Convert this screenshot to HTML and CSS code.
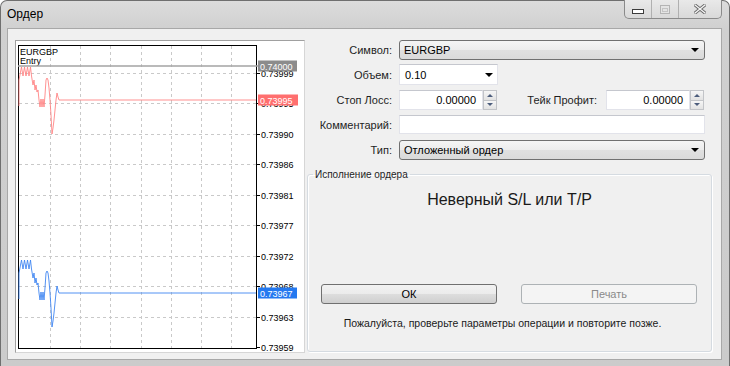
FILE: index.html
```html
<!DOCTYPE html>
<html lang="ru">
<head>
<meta charset="utf-8">
<title>Ордер</title>
<link rel="stylesheet" href="styles.css">
</head>
<body>
<div class="window">
  <div class="titlebar">
    <span class="title">Ордер</span>
    <div class="controls">
      <div class="ctl ctl-min"><svg width="12" height="6" viewBox="0 0 12 6"><rect x="0.5" y="0.5" width="11" height="4" fill="#fff" stroke="#3c3c3c"/></svg></div>
      <div class="ctl ctl-max"><svg width="10" height="9" viewBox="0 0 10 9"><rect x="0.5" y="0.5" width="9" height="8" fill="#e4e4e4" stroke="#b4b4b4"/><rect x="2.5" y="3.5" width="5" height="3" fill="none" stroke="#c4c4c4"/></svg></div>
      <div class="ctl ctl-close"><svg width="12" height="10" viewBox="0 0 12 10"><path d="M1 1 L11 9 M11 1 L1 9" stroke="#6a6a6a" stroke-width="3.2" stroke-linecap="square"/><path d="M1 1 L11 9 M11 1 L1 9" stroke="#f4f4f4" stroke-width="1.4" stroke-linecap="square"/></svg></div>
    </div>
  </div>
  <div class="client">
    <div class="chart">
      <svg width="288" height="311" viewBox="16 41 288 311" class="chart-svg">
        <rect x="16" y="41" width="288" height="311" fill="#fff"/>
        <g stroke="#c9c9c9" stroke-dasharray="3 3" stroke-width="1">
          <path d="M50.5 46V348M80.5 46V348M110.5 46V348M141.5 46V348M171.5 46V348M201.5 46V348M231.5 46V348"/>
          <path d="M19 73.5H256M19 103.5H256M19 134.5H256M19 164.5H256M19 195.5H256M19 225.5H256M19 256.5H256M19 286.5H256M19 317.5H256"/>
        </g>
        <rect x="18.5" y="45.5" width="238" height="303" fill="none" stroke="#000"/>
        <g stroke="#000">
          <path d="M257 73.5H260M257 103.5H260M257 134.5H260M257 164.5H260M257 195.5H260M257 225.5H260M257 256.5H260M257 286.5H260M257 317.5H260M257 347.5H260"/>
        </g>
        <g font-family="Liberation Sans, Arial, sans-serif" font-size="9" fill="#000">
          <text x="261" y="77">0.73999</text>
          <text x="261" y="107">0.73995</text>
          <text x="261" y="138">0.73990</text>
          <text x="261" y="168">0.73986</text>
          <text x="261" y="199">0.73981</text>
          <text x="261" y="229">0.73977</text>
          <text x="261" y="260">0.73972</text>
          <text x="261" y="290">0.73968</text>
          <text x="261" y="321">0.73963</text>
          <text x="261" y="351">0.73959</text>
          <text x="20" y="55">EURGBP</text>
          <text x="20" y="64">Entry</text>
        </g>
        <path d="M18 66H258" stroke="#a3a3a3" stroke-width="1.5"/>
        <polyline fill="none" stroke="#ff8585" stroke-width="0.9" points="19,106 19,80 20.5,72 21.5,67 23,76 24.5,67 26,76 27.5,67 29,76 30.5,67 31.5,76 33,85 34,80 35,90 36,85 37,92 38,90 39,100 40,107 41,99 42,107 43,99 44,107 45,95 46,80 47,78 48,80 49,88 50,100 51,115 52,134 53,128 54,120 55,110 56,100 57,93 58,97 59,100 256,100"/>
        <polyline fill="none" stroke="#3f86f2" stroke-width="0.9" transform="translate(0,193)" points="19,106 19,80 20.5,72 21.5,67 23,76 24.5,67 26,76 27.5,67 29,76 30.5,67 31.5,76 33,85 34,80 35,90 36,85 37,92 38,90 39,100 40,107 41,99 42,107 43,99 44,107 45,95 46,80 47,78 48,80 49,88 50,100 51,115 52,134 53,128 54,120 55,110 56,100 57,93 58,97 59,100 256,100"/>
        <rect x="258" y="60.5" width="39" height="11" fill="#8c8c8c"/>
        <rect x="258" y="94.5" width="40" height="11" fill="#ff6f6f"/>
        <rect x="258" y="287.5" width="39" height="11" fill="#2479f0"/>
        <g font-family="Liberation Sans, Arial, sans-serif" font-size="9" fill="#fff">
          <text x="260" y="69.5">0.74000</text>
          <text x="260" y="103.5">0.73995</text>
          <text x="260" y="296.5">0.73967</text>
        </g>
      </svg>
    </div>
    <div class="panel">
      <div class="row row-symbol">
        <span class="lbl">Символ:</span>
        <div class="combo combo-wide"><span class="combo-text">EURGBP</span><span class="arrow"></span></div>
      </div>
      <div class="row row-volume">
        <span class="lbl">Объем:</span>
        <div class="textbox volume"><span class="tb-text">0.10</span><span class="arrow"></span></div>
      </div>
      <div class="row row-sltp">
        <span class="lbl">Стоп Лосс:</span>
        <div class="spin">
          <div class="textbox num"><span class="tb-text">0.00000</span></div>
          <div class="spin-btns"><div class="sb sb-up"><span class="tri-up"></span></div><div class="sb sb-down"><span class="tri-down"></span></div></div>
        </div>
        <span class="lbl lbl-tp">Тейк Профит:</span>
        <div class="spin">
          <div class="textbox num"><span class="tb-text">0.00000</span></div>
          <div class="spin-btns"><div class="sb sb-up"><span class="tri-up"></span></div><div class="sb sb-down"><span class="tri-down"></span></div></div>
        </div>
      </div>
      <div class="row row-comment">
        <span class="lbl">Комментарий:</span>
        <div class="textbox comment"></div>
      </div>
      <div class="row row-type">
        <span class="lbl">Тип:</span>
        <div class="combo combo-wide"><span class="combo-text">Отложенный ордер</span><span class="arrow"></span></div>
      </div>
      <fieldset class="group">
        <legend class="legend">Исполнение ордера</legend>
        <div class="msg">Неверный S/L или T/P</div>
        <div class="buttons">
          <div class="btn">ОК</div>
          <div class="btn btn-disabled">Печать</div>
        </div>
        <div class="note">Пожалуйста, проверьте параметры операции и повторите позже.</div>
      </fieldset>
    </div>
  </div>
</div>
</body>
</html>
```

FILE: styles.css
```css
html, body {
  margin: 0;
  padding: 0;
  background: #ffffff;
  overflow: hidden;
}

body {
  font-family: "Liberation Sans", Arial, sans-serif;
  font-size: 11px;
  color: #000;
}

.window {
  width: 730px;
  height: 366px;
  box-sizing: border-box;
  border: 1px solid #6f6f6f;
  border-bottom: none;
  border-radius: 7px 7px 0 0;
  background: linear-gradient(#dcdcdc, #d0d0d0 28px, #cbcbcb);
  padding: 0 7px 6px 6px;
  display: flex;
  flex-direction: column;
}

.titlebar {
  height: 27px;
  display: flex;
  align-items: flex-start;
  flex: none;
}

.title {
  font-size: 12px;
  line-height: 14px;
  padding-top: 6px;
  color: #000;
}

.controls {
  margin-left: auto;
  margin-top: -1px;
  height: 18px;
  display: flex;
  border: 1px solid #8a8a8a;
  border-top: none;
  border-radius: 0 0 5px 5px;
  overflow: hidden;
  background: linear-gradient(#e9e9e9, #d9d9d9);
}

.ctl {
  display: flex;
  align-items: center;
  justify-content: center;
  height: 18px;
}

.ctl-min {
  width: 26px;
  border-right: 1px solid #b0b0b0;
}

.ctl-min svg {
  margin-top: 6px;
}

.ctl-max {
  width: 26px;
  border-right: 1px solid #b0b0b0;
}

.ctl-close {
  width: 42px;
}

.client {
  flex: 1;
  border: 1px solid #a8a8a8;
  background: #f0f0f0;
  display: flex;
  align-items: flex-start;
  padding: 11px 0 0 7px;
}

.chart {
  width: 290px;
  height: 313px;
  box-sizing: border-box;
  border: 1px solid #a0a0a0;
  border-right-color: #d6d6d6;
  border-bottom-color: #d6d6d6;
  flex: none;
}

.chart-svg {
  display: block;
}

.panel {
  margin-left: 2px;
  width: 405px;
  display: flex;
  flex-direction: column;
}

.row {
  display: flex;
  align-items: center;
}

.lbl {
  width: 85px;
  margin-right: 7px;
  text-align: right;
  flex: none;
  color: #1e1e1e;
}

.lbl-tp {
  width: 100px;
  margin-right: 9px;
}

.row-symbol { height: 20px; }
.row-volume { height: 21px; margin-top: 4px; }
.row-sltp { height: 20px; margin-top: 5px; }
.row-comment { height: 19px; margin-top: 5px; }
.row-type { height: 20px; margin-top: 6px; }

.combo {
  height: 20px;
  box-sizing: border-box;
  border: 1px solid #707070;
  border-radius: 3px;
  background: linear-gradient(#f5f5f5, #ececec 50%, #e0e0e0 51%, #dadada);
  display: flex;
  align-items: center;
  padding-left: 4px;
}

.combo-wide {
  width: 306px;
}

.combo-text {
  color: #000;
}

.arrow {
  margin-left: auto;
  margin-right: 5px;
  width: 0;
  height: 0;
  border-top: 4px solid #000;
  border-left: 4px solid transparent;
  border-right: 4px solid transparent;
}

.textbox {
  box-sizing: border-box;
  background: #fff;
  border: 1px solid #e2e3ea;
  border-top-color: #c5c7ce;
  display: flex;
  align-items: center;
  height: 100%;
}

.volume {
  width: 99px;
  padding-left: 5px;
}

.volume .arrow {
  margin-right: 4px;
}

.comment {
  width: 306px;
}

.spin {
  display: flex;
  width: 98px;
  height: 20px;
  flex: none;
}

.num {
  width: 84px;
  justify-content: flex-end;
  padding-right: 6px;
}

.spin-btns {
  width: 14px;
  display: flex;
  flex-direction: column;
}

.sb {
  flex: 1;
  box-sizing: border-box;
  border: 1px solid #c2c4c8;
  background: linear-gradient(#f6f6f6, #e2e2e2);
  display: flex;
  align-items: center;
  justify-content: center;
}

.sb-down {
  border-top: none;
}

.tri-up {
  width: 0;
  height: 0;
  border-bottom: 3px solid #4c5d7c;
  border-left: 3px solid transparent;
  border-right: 3px solid transparent;
}

.tri-down {
  width: 0;
  height: 0;
  border-top: 3px solid #4c5d7c;
  border-left: 3px solid transparent;
  border-right: 3px solid transparent;
}

.group {
  margin: 8px 0 0 0;
  padding: 0 13px;
  width: 405px;
  height: 184px;
  box-sizing: border-box;
  border: 1px solid #d5dbe1;
  border-radius: 3px;
  box-shadow: inset 1px 1px 0 #ffffff, 1px 1px 0 #ffffff;
  min-width: 0;
}

.legend {
  font-size: 10px;
  line-height: 13px;
  padding: 0 2px;
  margin-left: -8px;
  color: #1e1e1e;
}

.msg {
  margin-top: 10px;
  font-size: 16px;
  line-height: 18px;
  text-align: center;
  color: #1a1a1a;
}

.buttons {
  margin-top: 75px;
  display: flex;
  gap: 24px;
}

.btn {
  width: 176px;
  height: 20px;
  box-sizing: border-box;
  border: 1px solid #707070;
  border-radius: 3px;
  background: linear-gradient(#f2f2f2, #ebebeb 50%, #dddddd 51%, #cfcfcf);
  display: flex;
  align-items: center;
  justify-content: center;
  color: #000;
}

.btn-disabled {
  border-color: #adb2b5;
  background: #f4f4f4;
  color: #8a8a8a;
}

.note {
  margin-top: 13px;
  font-size: 10.5px;
  line-height: 13px;
  text-align: center;
  padding-right: 14px;
  color: #1a1a1a;
}
```
